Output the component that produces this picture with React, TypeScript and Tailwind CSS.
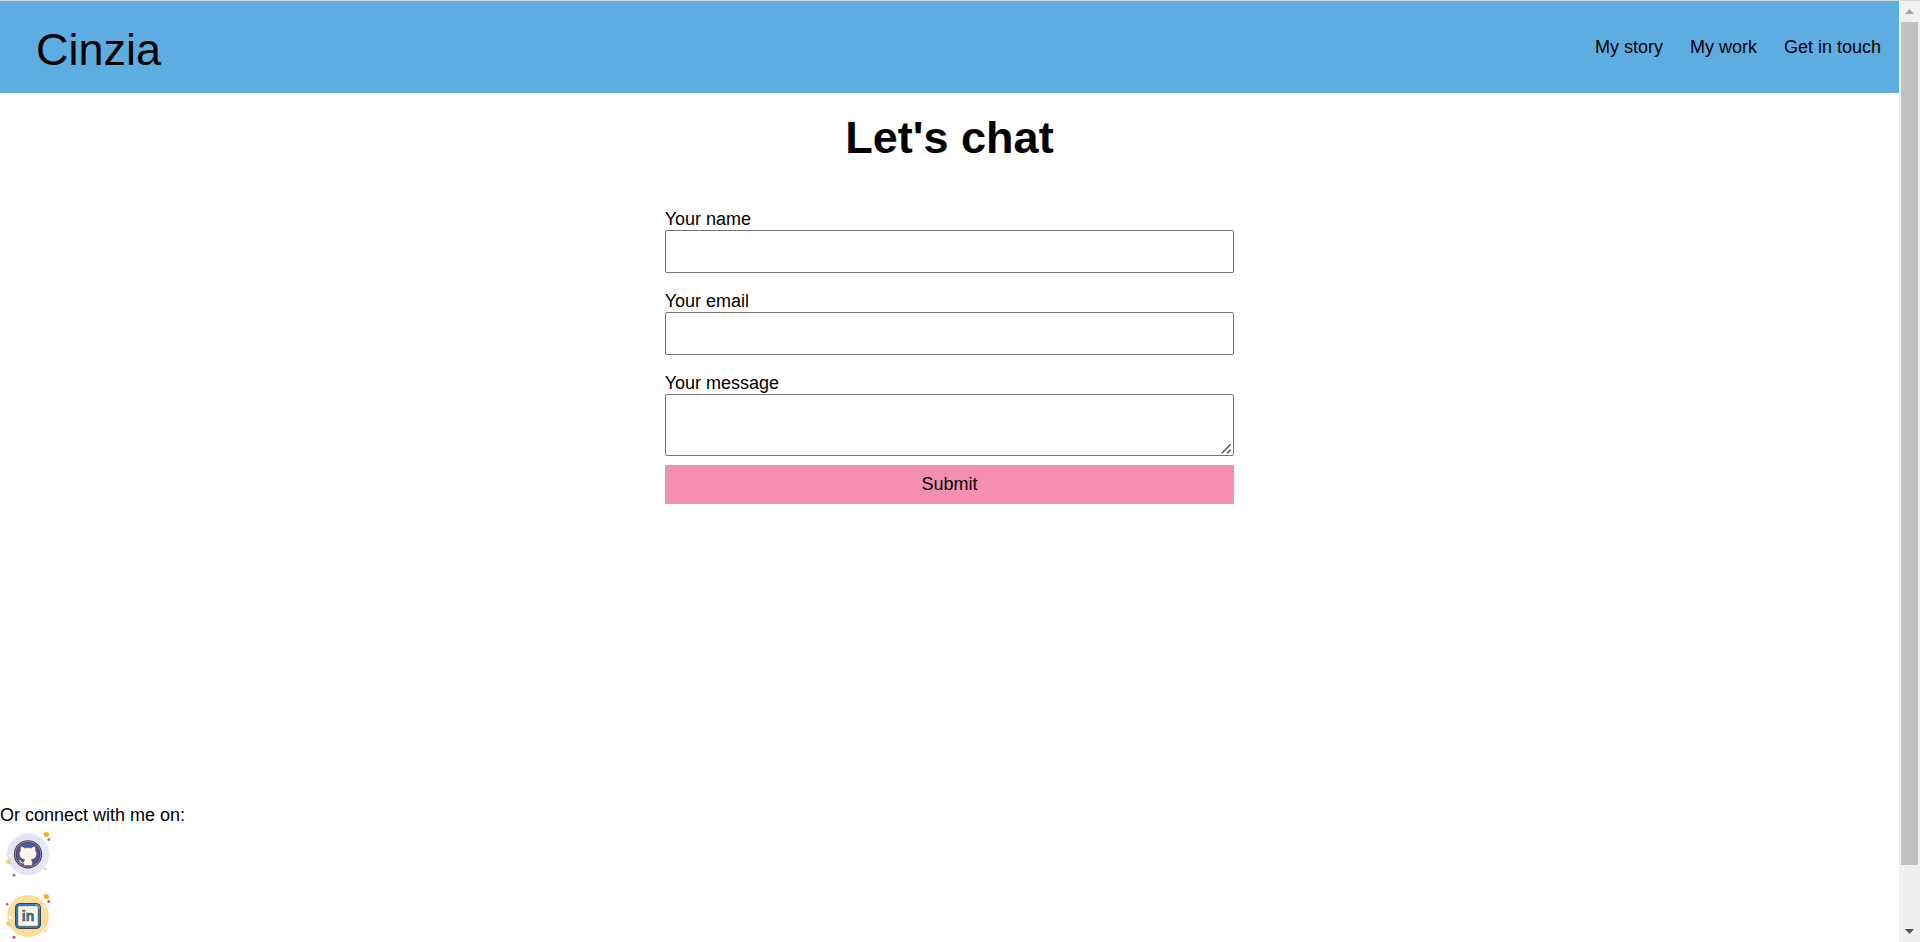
import React from "react";

const navLinks = [
  { label: "My story", href: "#story" },
  { label: "My work", href: "#work" },
  { label: "Get in touch", href: "#contact" },
];

function Sparkles({ accent, extra }: { accent: string; extra?: boolean }) {
  return (
    <>
      <path d="M42.5 7.3h4" stroke="#fbcd59" strokeWidth="1" />
      <circle cx="46.4" cy="8.5" r="2.6" fill="#f4b413" />
      <circle cx="48.7" cy="13.5" r="1.4" fill={accent} />
      <circle cx="44.7" cy="19" r="1" fill="#fff" />
      <circle cx="10.3" cy="29.5" r="1.4" fill="#fff" />
      <circle cx="8.4" cy="35.6" r="2.2" fill="#fbc65a" />
      <path d="M9 37.5h3" stroke="#fbcd59" strokeWidth="1" />
      <circle cx="45.3" cy="43" r="1.2" fill="#fbcd59" />
      <circle cx="14" cy="49.3" r="1.5" fill={accent} />
      {extra && <circle cx="7.2" cy="16.3" r="1.3" fill={accent} />}
    </>
  );
}

function GithubBadge() {
  return (
    <svg viewBox="0 0 54 54" className="size-[54px]" aria-hidden="true">
      <circle cx="28" cy="28.3" r="21" fill="#e3e3f9" />
      <circle cx="28" cy="28.3" r="13.6" fill="#a79fce" stroke="#543f50" strokeWidth="1.1" />
      <circle cx="28" cy="28.3" r="11.8" fill="#4758a5" stroke="#543f50" strokeWidth="1.1" />
      <path
        d="M20.8 20.3c1.5 0 2.8.8 3.8 1.7 2.1-.5 4.7-.5 6.8 0 1-.9 2.3-1.7 3.8-1.7.5 1.5.4 2.9.1 3.900 1 1.300 1.400 2.700 1.200 4.500-.3 2.800-2.300 4.400-5.300 4.900.8 1 1 1.900 1 3.200v2.500c-1.300.4-7 .4-8.400 0v-1.700c-2.100.3-3.400-.4-4.100-1.900-.4-.9-.8-1.300-1.500-1.700 1.500-.5 2.500.4 3.200 1.400.7.900 1.400 1 2.400.7.1-1 .4-1.800 1-2.500-3-.5-5-2.100-5.300-4.900-.2-1.800.2-3.200 1.200-4.500-.3-1-.4-2.400.1-3.900z"
        fill="#fff7e4"
        stroke="#5b4a55"
        strokeWidth=".4"
      />
      <Sparkles accent="#8c86c4" />
    </svg>
  );
}

function LinkedinBadge() {
  return (
    <svg viewBox="0 0 54 54" className="size-[54px]" aria-hidden="true">
      <circle cx="28" cy="28" r="21" fill="#fddf9d" />
      <rect x="15.5" y="15.5" width="25" height="25" rx="4" fill="#2180c9" stroke="#4b3a46" strokeWidth="1" />
      <path d="M35 16.900h2.500a1.600 1.600 0 0 1 1.600 1.600v2.500" fill="none" stroke="#7cc4f2" strokeWidth="1" />
      <rect x="17.800" y="17.800" width="20.400" height="20.400" rx="1.500" fill="#fff8e7" stroke="#4b3a46" strokeWidth=".6" />
      <text
        x="28"
        y="33"
        textAnchor="middle"
        fontFamily="Liberation Sans, Arial, sans-serif"
        fontSize="14"
        fontWeight="700"
        fill="#2180c9"
        stroke="#4b5265"
        strokeWidth=".6"
      >
        in
      </text>
      <Sparkles accent="#e8425c" extra />
    </svg>
  );
}

function Field({ id, label, type }: { id: string; label: string; type: string }) {
  return (
    <div className="mb-[18px] flex flex-col">
      <label htmlFor={id}>{label}</label>
      <input
        id={id}
        name={id}
        type={type}
        className="h-[43px] rounded-[2px] border border-[#767676] bg-white px-2"
      />
    </div>
  );
}

function ScrollTrack() {
  return (
    <div className="flex w-[21px] shrink-0 flex-col items-center bg-[#f0f0f0]" aria-hidden="true">
      <div className="flex h-[21px] items-center">
        <svg viewBox="0 0 9 5" className="h-[5px] w-[9px]">
          <path d="M0 5 4.500 0 9 5z" fill="#a3a3a3" />
        </svg>
      </div>
      <div className="flex w-[17px] flex-1 flex-col">
        <div className="grow-[15] bg-[#c1c1c1]" />
        <div className="grow" />
      </div>
      <div className="flex h-[21px] items-center">
        <svg viewBox="0 0 9 5" className="h-[5px] w-[9px]">
          <path d="M0 0h9L4.500 5z" fill="#505050" />
        </svg>
      </div>
    </div>
  );
}

export default function App() {
  return (
    <div className="flex min-h-screen flex-col border-t border-[#d5d9dc] bg-white font-['Liberation_Sans',Arial,sans-serif] text-[18px] leading-[21px] text-black">
      <div className="flex flex-1">
        <div className="flex min-w-0 flex-1 flex-col">
          <header className="flex h-[92px] items-center justify-between bg-[#5dade2] pr-[18px] pl-9">
            <a href="#home" className="pt-[6px] text-[45px] leading-[52px]">
              Cinzia
            </a>
            <nav className="flex gap-[27px]">
              {navLinks.map((link) => (
                <a key={link.href} href={link.href}>
                  {link.label}
                </a>
              ))}
            </nav>
          </header>
          <main className="flex flex-1 flex-col items-center pt-[19px]">
            <h1 className="mb-[45px] text-[45px] leading-[52px] font-bold">Let's chat</h1>
            <form className="flex w-3/10 flex-col" onSubmit={(e) => e.preventDefault()}>
              <Field id="name" label="Your name" type="text" />
              <Field id="email" label="Your email" type="email" />
              <label htmlFor="message">Your message</label>
              <div className="relative flex">
                <textarea
                  id="message"
                  name="message"
                  className="h-[62px] w-full resize-y rounded-[2px] border border-[#767676] bg-white px-2 [&::-webkit-resizer]:bg-transparent"
                />
                <svg
                  viewBox="0 0 12 12"
                  className="pointer-events-none absolute right-[2px] bottom-[2px] size-3"
                  aria-hidden="true"
                >
                  <path d="M1.800 11.300 10.700 2.300M7 11.300l3.700-3.500" stroke="#555" strokeWidth="1.500" />
                </svg>
              </div>
              <button type="submit" className="mt-[9px] h-[39px] bg-[#f48fb1]">
                Submit
              </button>
            </form>
          </main>
          <footer>
            <p>Or connect with me on:</p>
            <ul className="flex flex-col gap-2">
              <li>
                <a href="#github" aria-label="GitHub" className="block w-[54px]">
                  <GithubBadge />
                </a>
              </li>
              <li>
                <a href="#linkedin" aria-label="LinkedIn" className="block w-[54px]">
                  <LinkedinBadge />
                </a>
              </li>
            </ul>
          </footer>
        </div>
        <ScrollTrack />
      </div>
    </div>
  );
}
